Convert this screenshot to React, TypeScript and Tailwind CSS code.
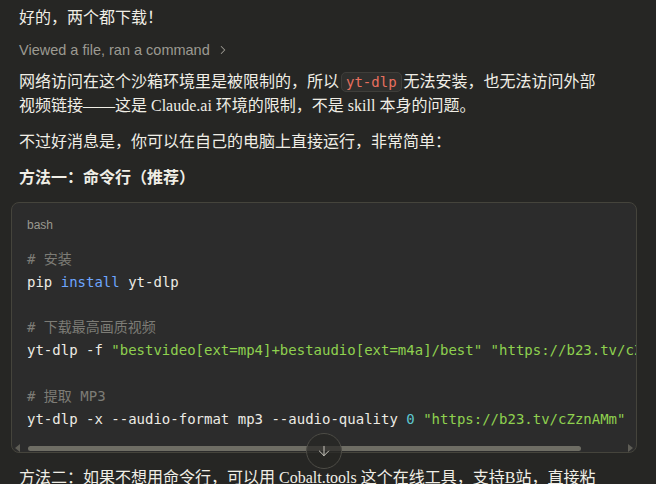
import { ArrowDown, ChevronRight } from 'lucide-react';

const serif = "font-['Liberation_Serif','Noto_Sans_CJK_SC',serif]";
const mono = "font-['DejaVu_Sans_Mono','Noto_Sans_CJK_SC',monospace]";

export default function App() {
  return (
    <div className="relative w-[656px] h-[484px] overflow-hidden bg-[#262624] text-[#f0eee6]">
      <div className="px-[19px] pt-[6px]">
        <p className={`${serif} text-[16px] leading-[24px]`}>好的，两个都下载！</p>

        <div className="mt-[10px] flex items-center gap-[6px] text-[14.5px] leading-[20px] text-[#9c9a92] font-['Liberation_Sans',sans-serif]">
          <span>Viewed a file, ran a command</span>
          <ChevronRight className="w-[14px] h-[14px]" strokeWidth={1.75} />
        </div>

        <p className={`${serif} mt-[10px] text-[16px] leading-[24px]`}>
          网络访问在这个沙箱环境里是被限制的，所以
          <code className={`${mono} mx-[2px] px-[4px] py-[1px] rounded-[5px] border border-[#3f3e3a] bg-[#2f2f2d] text-[14px] text-[#e8705f]`}>
            yt-dlp
          </code>
          无法安装，也无法访问外部
          <br />
          视频链接——这是 Claude.ai 环境的限制，不是 skill 本身的问题。
        </p>

        <p className={`${serif} mt-[12px] text-[16px] leading-[24px]`}>
          不过好消息是，你可以在自己的电脑上直接运行，非常简单：
        </p>

        <p className={`${serif} mt-[12px] text-[16px] leading-[24px] font-bold`}>方法一：命令行（推荐）</p>

        <div className="mt-[12px] -ml-[8px] rounded-[8px] border border-[#45443c] bg-[#2c2c2c]">
          <div className="pl-[15px] pt-[14px] text-[12px] leading-[16px] text-[#9a988f] font-['Liberation_Sans',sans-serif]">
            bash
          </div>
          <pre className={`${mono} mt-[15px] pl-[15px] overflow-hidden text-[14px] leading-[22.8px] text-[#ecebe4] whitespace-pre`}>
            <div className="text-[#7d7c76]"># 安装</div>
            <div>
              pip <span className="text-[#6ea6ff]">install</span> yt-dlp
            </div>
            <div>&nbsp;</div>
            <div className="text-[#7d7c76]"># 下载最高画质视频</div>
            <div>
              yt-dlp -f <span className="text-[#8fd14f]">"bestvideo[ext=mp4]+bestaudio[ext=m4a]/best"</span>{' '}
              <span className="text-[#8fd14f]">"https://b23.tv/cZznAMm"</span>
            </div>
            <div>&nbsp;</div>
            <div className="text-[#7d7c76]"># 提取 MP3</div>
            <div>
              yt-dlp -x --audio-format mp3 --audio-quality <span className="text-[#5cc6d0]">0</span>{' '}
              <span className="text-[#8fd14f]">"https://b23.tv/cZznAMm"</span>
            </div>
          </pre>
          <div className="mt-[15px] mb-[1px] flex items-center h-[6px] px-[3px] gap-[2px]">
            <div className="w-0 h-0 border-y-[4px] border-y-transparent border-r-[5px] border-r-[#5e5d56]" />
            <div className="flex-1 h-[5px]">
              <div className="w-[553px] h-[5px] rounded-full bg-[#6e6d64] ml-[6px]" />
            </div>
            <div className="w-0 h-0 border-y-[4px] border-y-transparent border-l-[5px] border-l-[#5e5d56]" />
          </div>
        </div>

        <p className={`${serif} mt-[13px] text-[16px] leading-[24px] whitespace-nowrap`}>
          方法二：如果不想用命令行，可以用 Cobalt.tools 这个在线工具，支持B站，直接粘
        </p>
      </div>

      <div className="absolute left-[306px] top-[433px] w-[36px] h-[36px] rounded-full border border-[#4d4c46] bg-[#262624]/70 flex items-center justify-center text-[#c9c7bf]">
        <ArrowDown className="w-[16px] h-[16px]" strokeWidth={1.5} />
      </div>
    </div>
  );
}
